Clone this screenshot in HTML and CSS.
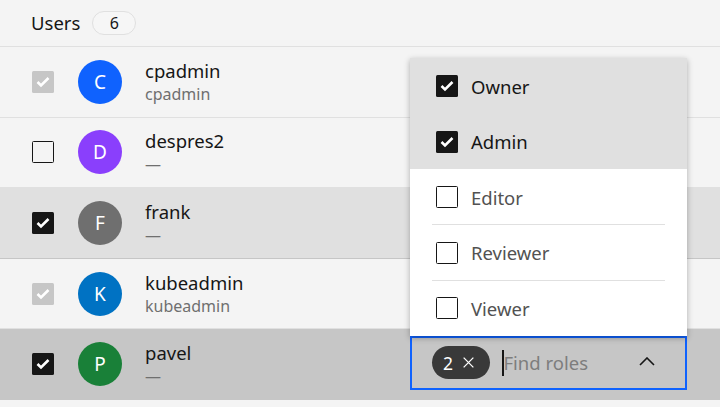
FILE: index.html
```html
<!DOCTYPE html>
<html lang="en">
<head>
<meta charset="utf-8">
<title>Users</title>
<link rel="stylesheet" href="styles.css">
</head>
<body>
<div class="table">
  <div class="header">
    <span class="title">Users</span>
    <span class="count">6</span>
  </div>

  <div class="row">
    <span class="cb cb-disabled"><svg viewBox="0 0 22 22"><path d="M5.5 11 L9 14.5 L16.5 7"/></svg></span>
    <span class="avatar av-c">C</span>
    <div class="user"><div class="name">cpadmin</div><div class="sub">cpadmin</div></div>
    <div class="roles"></div>
  </div>

  <div class="row">
    <span class="cb"></span>
    <span class="avatar av-d">D</span>
    <div class="user"><div class="name">despres2</div><div class="sub">—</div></div>
    <div class="roles"></div>
  </div>

  <div class="row row-selected">
    <span class="cb cb-checked"><svg viewBox="0 0 22 22"><path d="M5.5 11 L9 14.5 L16.5 7"/></svg></span>
    <span class="avatar av-f">F</span>
    <div class="user"><div class="name">frank</div><div class="sub">—</div></div>
    <div class="roles"></div>
  </div>

  <div class="row">
    <span class="cb cb-disabled"><svg viewBox="0 0 22 22"><path d="M5.5 11 L9 14.5 L16.5 7"/></svg></span>
    <span class="avatar av-k">K</span>
    <div class="user"><div class="name">kubeadmin</div><div class="sub">kubeadmin</div></div>
    <div class="roles"></div>
  </div>

  <div class="row row-active">
    <span class="cb cb-checked"><svg viewBox="0 0 22 22"><path d="M5.5 11 L9 14.5 L16.5 7"/></svg></span>
    <span class="avatar av-p">P</span>
    <div class="user"><div class="name">pavel</div><div class="sub">—</div></div>
    <div class="roles">
      <div class="combo">
        <span class="tag">2<svg class="x" viewBox="0 0 12 12"><path d="M0.7 0.7 L11.3 11.3 M11.3 0.7 L0.7 11.3"/></svg></span>
        <span class="caret"></span>
        <span class="placeholder">Find roles</span>
        <svg class="chev" viewBox="0 0 16 9"><path d="M1 8 L8 1 L15 8"/></svg>
        <div class="menu">
          <div class="item item-selected"><div class="item-inner"><span class="cb cb-checked"><svg viewBox="0 0 22 22"><path d="M5.5 11 L9 14.5 L16.5 7"/></svg></span><span class="label">Owner</span></div></div>
          <div class="item item-selected"><div class="item-inner"><span class="cb cb-checked"><svg viewBox="0 0 22 22"><path d="M5.5 11 L9 14.5 L16.5 7"/></svg></span><span class="label">Admin</span></div></div>
          <div class="item item-first"><div class="item-inner"><span class="cb"></span><span class="label">Editor</span></div></div>
          <div class="item"><div class="item-inner"><span class="cb"></span><span class="label">Reviewer</span></div></div>
          <div class="item"><div class="item-inner"><span class="cb"></span><span class="label">Viewer</span></div></div>
        </div>
      </div>
    </div>
  </div>
</div>
</body>
</html>
```

FILE: styles.css
```css
html, body {
  margin: 0;
  padding: 0;
}
body {
  background: #f4f4f4;
  font-family: "Noto Sans", "DejaVu Sans", sans-serif;
  color: #161616;
  width: 720px;
  height: 407px;
  overflow: hidden;
}
.table {
  display: flex;
  flex-direction: column;
}
.header {
  height: 46px;
  border-bottom: 1px solid #e0e0e0;
  display: flex;
  align-items: center;
  padding-left: 31px;
  gap: 12px;
}
.title {
  font-size: 18.5px;
  line-height: 24px;
  margin-top: -1px;
}
.count {
  box-sizing: border-box;
  width: 44px;
  height: 24px;
  border: 1.5px solid #e0e0e0;
  border-radius: 12px;
  background: #f6f6f6;
  font-size: 16px;
  display: flex;
  align-items: center;
  justify-content: center;
}
.row {
  height: 69.6px;
  border-bottom: 1px solid #e0e0e0;
  display: flex;
  align-items: center;
  padding-left: 32px;
}
.row-selected {
  background: #e0e0e0;
  border-bottom-color: #c6c6c6;
}
.row-active {
  background: #c6c6c6;
  border-bottom-color: #c6c6c6;
}
.cb {
  box-sizing: border-box;
  width: 22px;
  height: 22px;
  border: 1.4px solid #161616;
  border-radius: 1.5px;
  flex: none;
  display: flex;
}
.cb svg {
  width: 100%;
  height: 100%;
}
.cb svg path {
  fill: none;
  stroke: #fff;
  stroke-width: 2.6;
}
.cb-checked {
  background: #161616;
  border: none;
}
.cb-disabled {
  background: #c6c6c6;
  border: none;
}
.avatar {
  width: 44px;
  height: 44px;
  border-radius: 50%;
  margin-left: 24px;
  color: #fff;
  font-size: 19px;
  display: flex;
  align-items: center;
  justify-content: center;
  flex: none;
}
.av-c { background: #0f62fe; }
.av-d { background: #8a3ffc; }
.av-f { background: #6f6f6f; }
.av-k { background: #0072c3; }
.av-p { background: #198038; }
.user {
  margin-left: 23px;
  width: 265px;
  display: flex;
  flex-direction: column;
}
.name {
  font-size: 18.5px;
  line-height: 24px;
}
.sub {
  font-size: 16px;
  line-height: 22px;
  color: #6f6f6f;
}
.roles {
  width: 277px;
  height: 100%;
  display: flex;
  align-items: center;
}
.combo {
  position: relative;
  box-sizing: border-box;
  width: 277px;
  height: 54px;
  margin-top: -3px;
  border: 2px solid #0f62fe;
  display: flex;
  align-items: center;
  padding-left: 20px;
}
.tag {
  height: 33px;
  width: 58px;
  box-sizing: border-box;
  border-radius: 17px;
  background: #393939;
  color: #fff;
  font-size: 17.5px;
  display: flex;
  align-items: center;
  padding-left: 11px;
  gap: 10px;
}
.tag .x {
  width: 11px;
  height: 11px;
}
.tag .x path {
  stroke: #fff;
  stroke-width: 1.4;
  fill: none;
}
.caret {
  width: 1.5px;
  height: 26px;
  background: #161616;
  margin-left: 12px;
}
.placeholder {
  font-size: 18.5px;
  color: #7d7d7d;
  flex: 1;
}
.chev {
  width: 16px;
  height: 9px;
  margin-right: 30px;
  margin-top: -2px;
}
.chev path {
  fill: none;
  stroke: #161616;
  stroke-width: 1.6;
}
.menu {
  position: absolute;
  left: -2px;
  bottom: calc(100% + 2px);
  width: 277px;
  background: #fff;
  box-shadow: 0 2px 6px rgba(0, 0, 0, 0.3);
}
.item {
  height: 55.6px;
  padding: 0 22px;
}
.item-selected {
  background: #e0e0e0;
}
.item-inner {
  height: 100%;
  box-sizing: border-box;
  border-top: 1px solid #e0e0e0;
  display: flex;
  align-items: center;
  padding-left: 4px;
  gap: 13px;
}
.item-selected .item-inner,
.item-first .item-inner {
  border-top-color: transparent;
}
.label {
  font-size: 18.5px;
  color: #525252;
}
.item-selected .label {
  color: #161616;
}
```
